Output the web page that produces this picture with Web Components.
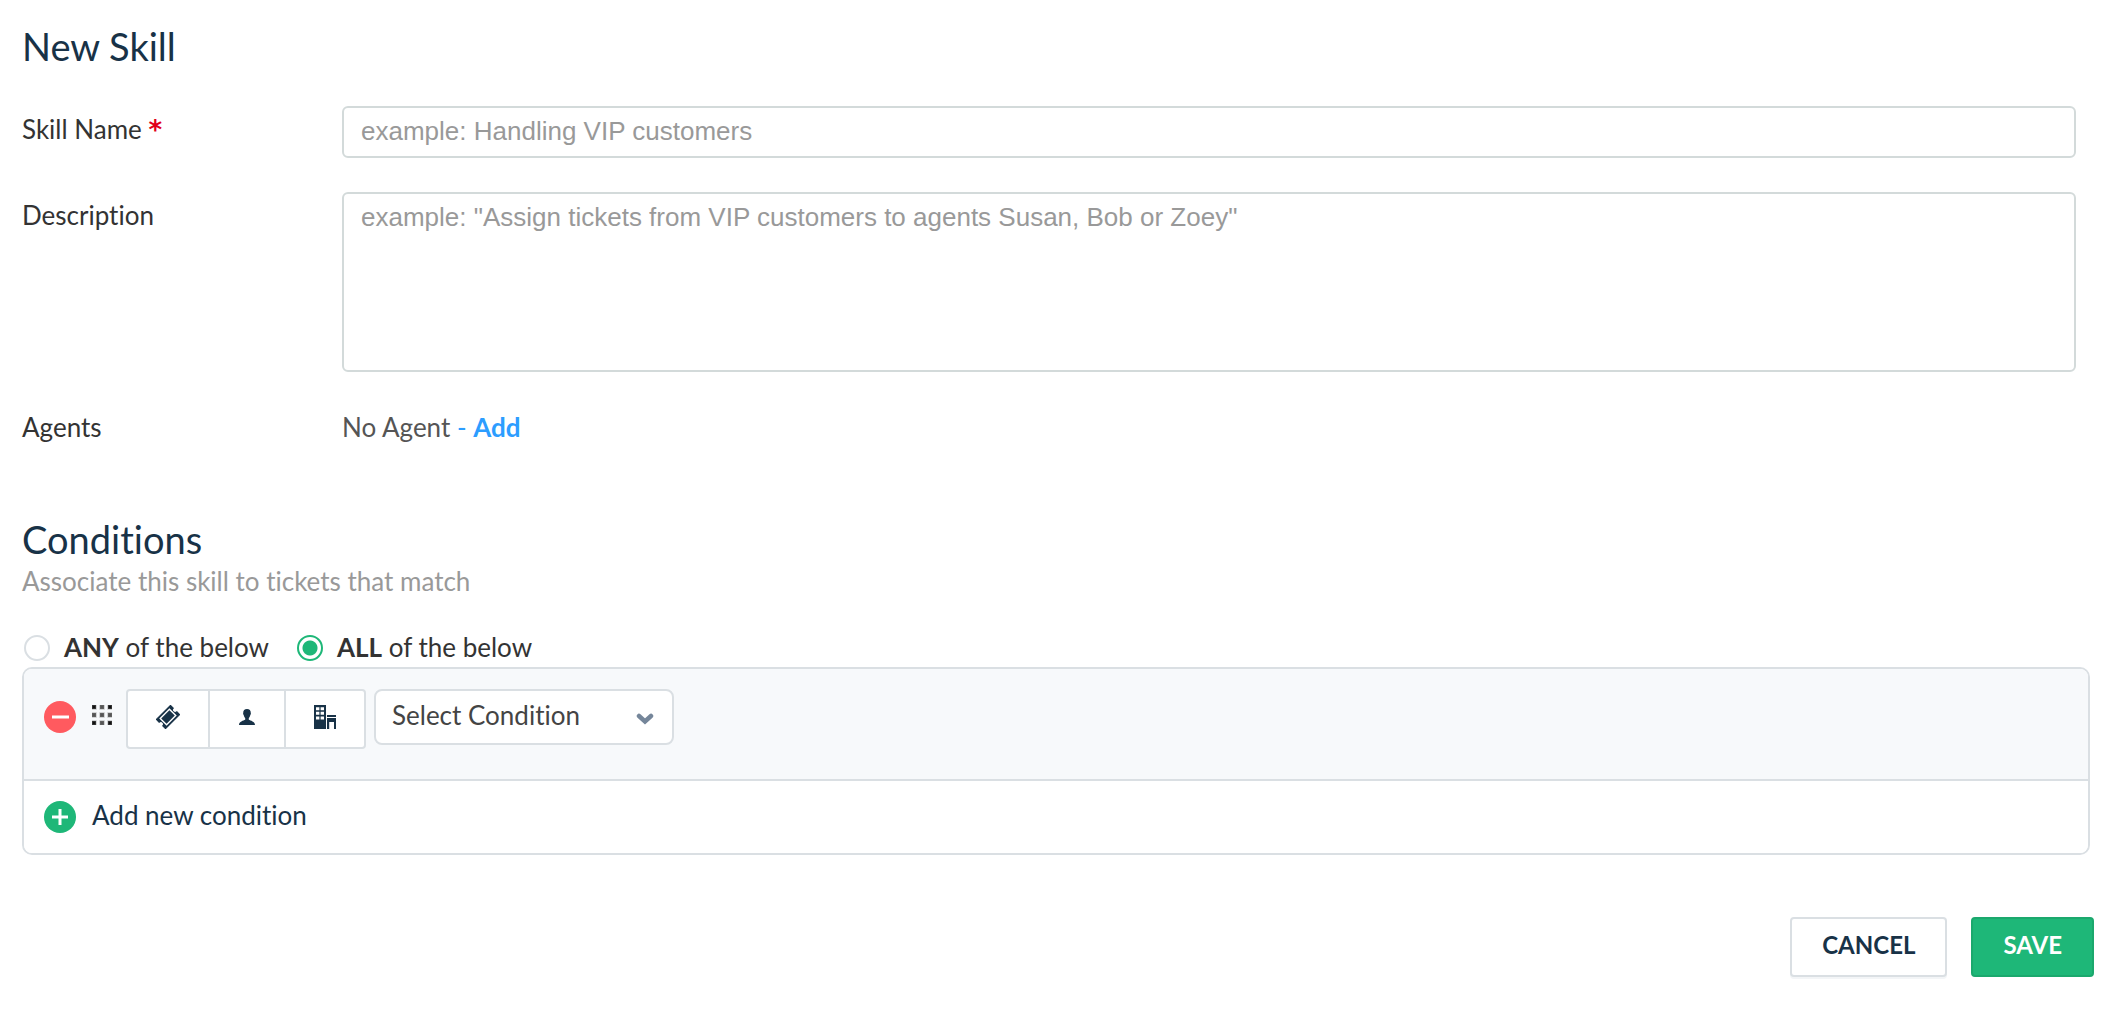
<!DOCTYPE html>
<html lang="en">
<head>
<meta charset="utf-8">
<meta name="viewport" content="width=device-width, initial-scale=1">
<title>New Skill</title>
<style>
    body {
        margin: 0;
        background: #fff;
        color: #333;
        font-family: Lato, "Open Sans", sans-serif;
        font-size: 26px;
        font-variant-ligatures: none;
        line-height: 32px;
        --navy: #183247;
        --green: #1eb778;
        --line: #dadfe3;
    }
</style>
</head>
<body>
<skill-form></skill-form>

<script>
class FieldRow extends HTMLElement {

    constructor() {
        super();
        this._shadowDOM = this.attachShadow({ mode: "open" });
    }
    connectedCallback() {
        this.render();
    }

    get control() {
        const placeholder = this.getAttribute("placeholder");
        if (this.getAttribute("type") === "textarea") {
            return `<textarea id="field" placeholder='${placeholder}'></textarea>`;
        }
        return `<input id="field" type="text" placeholder='${placeholder}' required>`;
    }

    render() {
        const star = this.hasAttribute("required") ? `<span class="star">*</span>` : "";
        this._shadowDOM.innerHTML = `
        <style>
            * {
                margin: 0;
                box-sizing: border-box;
            }
            :host {
                display: flex;
                align-items: flex-start;
            }
            label {
                flex: 0 0 320px;
                padding-top: 7px;
            }
            .star {
                color: #e1001a;
                font-family: "DejaVu Sans", sans-serif;
                font-weight: 700;
            }
            input, textarea {
                flex: 1;
                min-width: 0;
                border: 2px solid #d3dada;
                border-radius: 6px;
                padding: 7px 17px;
                background: #fff;
                color: #333;
                font: 26px/32px "Liberation Sans", Arial, sans-serif;
                outline: none;
                resize: none;
            }
            input {
                height: 52px;
                padding-bottom: 9px;
            }
            textarea {
                height: 180px;
            }
            ::placeholder {
                color: #999;
                opacity: 1;
            }
        </style>
        <label for="field">${this.getAttribute("label")} ${star}</label>
        ${this.control}
        `;
    }
}

class AgentsRow extends HTMLElement {

    constructor() {
        super();
        this._shadowDOM = this.attachShadow({ mode: "open" });
    }
    connectedCallback() {
        this.render();
    }

    render() {
        this._shadowDOM.innerHTML = `
        <style>
            :host {
                display: flex;
            }
            .label {
                flex: 0 0 320px;
            }
            .value {
                color: #555;
            }
            a {
                color: #2c9dff;
                text-decoration: none;
            }
        </style>
        <span class="label">Agents</span>
        <span class="value"><slot></slot> <a href="#add-agent">- <b>Add</b></a></span>
        `;
    }
}

class MatchType extends HTMLElement {

    constructor() {
        super();
        this._shadowDOM = this.attachShadow({ mode: "open" });
    }
    connectedCallback() {
        this.render();
    }

    render() {
        this._shadowDOM.innerHTML = `
        <style>
            :host {
                display: flex;
                gap: 28px;
                padding-left: 2px;
            }
            label {
                display: flex;
                align-items: center;
                gap: 14px;
            }
            input {
                appearance: none;
                box-sizing: border-box;
                width: 26px;
                height: 26px;
                margin: 2px 0 0;
                border: 2px solid var(--line);
                border-radius: 50%;
                background: #fff;
            }
            input:checked {
                border-color: var(--green);
                background: radial-gradient(circle, var(--green) 7px, #fff 8px);
            }
        </style>
        <label><input type="radio" name="match" value="any"><span><b>ANY</b> of the below</span></label>
        <label><input type="radio" name="match" value="all" checked><span><b>ALL</b> of the below</span></label>
        `;
    }
}

class SourcePicker extends HTMLElement {

    constructor() {
        super();
        this._shadowDOM = this.attachShadow({ mode: "open" });
    }
    connectedCallback() {
        this.render();
    }

    render() {
        this._shadowDOM.innerHTML = `
        <style>
            :host {
                display: flex;
                box-sizing: border-box;
                height: 60px;
                border: 2px solid var(--line);
                border-radius: 4px;
                background: #fff;
                overflow: hidden;
            }
            button {
                display: flex;
                align-items: center;
                justify-content: center;
                width: 76px;
                padding: 0 0 4px;
                border: 0;
                background: none;
                color: var(--navy);
            }
            button:first-of-type, button:last-of-type {
                width: 80px;
            }
            button + button {
                border-left: 2px solid var(--line);
            }
            svg {
                fill: currentColor;
            }
        </style>
        <button type="button" aria-label="Ticket">
            <svg width="24" height="24" viewBox="0 0 24 24">
                <g transform="rotate(-45 12 12)">
                    <path d="M2 5.500H22V9.500A2.500 2.500 0 0 0 22 14.500V18.500H2V14.500A2.500 2.500 0 0 0 2 9.500Z" stroke="currentColor" stroke-width="1" stroke-linejoin="round"/>
                    <rect x="5.500" y="7.500" width="13" height="9" fill="none" stroke="#fff" stroke-width="1.400"/>
                </g>
            </svg>
        </button>
        <button type="button" aria-label="Contact">
            <svg width="16" height="16" viewBox="0 0 16 16">
                <path d="M8 0C5.500 0 4.200 1.500 4.200 4C4 4.500 4.100 5.600 4.700 6C5 7.500 5.500 8.400 6.200 9V10.700C4.500 11.600 0 12.400 0 16H16C16 12.400 11.500 11.600 9.800 10.700V9C10.500 8.400 11 7.500 11.300 6C11.900 5.600 12 4.500 11.800 4C11.800 1.500 10.500 0 8 0Z"/>
            </svg>
        </button>
        <button type="button" aria-label="Company">
            <svg width="22" height="24" viewBox="0 0 22 24">
                <path d="M0 0H12V24H0Z"/>
                <path d="M2 2.200H5.400V5.200H2ZM6.600 2.200H10V5.200H6.600ZM2 6.800H5.400V9.800H2ZM6.600 6.800H10V9.800H6.600ZM2 11.400H5.400V14.600H2ZM6.600 11.400H10V14.600H6.600Z" fill="#fff"/>
                <path d="M13 10H22V12H13ZM13 13H22V24H20V17H15.200V24H13Z"/>
            </svg>
        </button>
        `;
    }
}

class ConditionPanel extends HTMLElement {

    constructor() {
        super();
        this._shadowDOM = this.attachShadow({ mode: "open" });
    }
    connectedCallback() {
        this.render();
    }

    render() {
        // the drag handle is a 3x3 grid of dots, darker towards the corners
        const dots = [0, 8, 16].map(y => [0, 8, 16].map(x => {
            const shade = x !== 8 && y !== 8 ? "#111" : "#555";
            return `<rect x="${x}" y="${y}" width="4" height="4" fill="${shade}" stroke="#777" stroke-opacity=".4" stroke-width="1.500"/>`;
        }).join("")).join("");

        this._shadowDOM.innerHTML = `
        <style>
            * {
                box-sizing: border-box;
            }
            :host {
                display: block;
                border: 2px solid var(--line);
                border-radius: 10px;
                overflow: hidden;
            }
            .condition {
                display: flex;
                align-items: flex-start;
                padding: 20px 20px 30px;
                background: #f7f9fb;
                border-bottom: 2px solid var(--line);
            }
            .remove {
                display: flex;
                margin: 12px 16px 0 0;
                padding: 0;
                border: 0;
                background: none;
            }
            .grip {
                margin: 16px 14px 0 0;
            }
            .select {
                display: grid;
                align-items: center;
                width: 300px;
                margin-left: 8px;
            }
            .select > * {
                grid-area: 1 / 1;
            }
            select {
                appearance: none;
                width: 100%;
                height: 56px;
                padding: 0 16px 4px;
                border: 2px solid var(--line);
                border-radius: 8px;
                background: #fff;
                color: #444;
                font: inherit;
                font-variant-ligatures: none;
            }
            .arrow {
                justify-self: end;
                margin: 4px 20px 0 0;
                pointer-events: none;
            }
            .add {
                display: flex;
                align-items: center;
                gap: 16px;
                width: 100%;
                padding: 18px 20px 20px;
                border: 0;
                background: #fff;
                color: var(--navy);
                font: inherit;
                font-variant-ligatures: none;
                line-height: 32px;
            }
            .add svg {
                margin-top: 2px;
            }
            .add span {
                padding-bottom: 2px;
            }
        </style>
        <div class="condition">
            <button class="remove" type="button" aria-label="Remove condition">
                <svg width="32" height="32" viewBox="0 0 32 32"><circle cx="16" cy="16" r="16" fill="#ff5a5f"/><path d="M8 16H25" stroke="#fff" stroke-width="3"/></svg>
            </button>
            <svg class="grip" width="20" height="20" viewBox="0 0 20 20">${dots}</svg>
            <source-picker></source-picker>
            <div class="select">
                <select aria-label="Condition"><option>Select Condition</option></select>
                <svg class="arrow" width="18" height="12" viewBox="0 0 18 12"><path d="M3 3L9 8.500L15 3" fill="none" stroke="#75869a" stroke-width="4.500" stroke-linecap="round"/></svg>
            </div>
        </div>
        <button class="add" type="button">
            <svg width="32" height="32" viewBox="0 0 32 32"><circle cx="16" cy="16" r="16" fill="#1eb778"/><path d="M8 16H24M16 8V24" stroke="#fff" stroke-width="3"/></svg>
            <span>Add new condition</span>
        </button>
        `;
    }
}

class ActionButton extends HTMLElement {

    constructor() {
        super();
        this._shadowDOM = this.attachShadow({ mode: "open" });
    }
    connectedCallback() {
        this.render();
    }

    render() {
        this._shadowDOM.innerHTML = `
        <style>
            :host {
                display: block;
            }
            button {
                box-sizing: border-box;
                height: 60px;
                padding: 0 30px 4px;
                border: 2px solid var(--line);
                border-radius: 4px;
                background: #fff;
                box-shadow: 0 2px 0 #f3f5f7;
                color: var(--navy);
                font: bold 24px/32px Lato, sans-serif;
            }
            :host([primary]) button {
                border-color: #1ba86d;
                background: var(--green);
                box-shadow: none;
                color: #fff;
            }
        </style>
        <button type="button"><slot></slot></button>
        `;
    }
}

class SkillForm extends HTMLElement {

    constructor() {
        super();
        this._shadowDOM = this.attachShadow({ mode: "open" });
    }
    connectedCallback() {
        this.render();
    }

    render() {
        this._shadowDOM.innerHTML = `
        <style>
            * {
                margin: 0;
                box-sizing: border-box;
            }
            :host {
                display: block;
                padding: 22px 22px 32px;
            }
            h1, h2 {
                color: var(--navy);
                font-size: 38px;
                font-weight: 400;
                line-height: 48px;
            }
            .fields {
                display: flex;
                flex-direction: column;
                gap: 34px;
                margin: 36px 18px 72px 0;
            }
            agents-row {
                margin-top: 5px;
            }
            .hint {
                margin-top: 2px;
                color: #999;
            }
            match-type {
                margin: 34px 0 4px;
            }
            condition-panel {
                margin-right: 4px;
            }
            footer {
                display: flex;
                justify-content: flex-end;
                gap: 24px;
                margin-top: 62px;
            }
        </style>
        <h1>New Skill</h1>
        <div class="fields">
            <field-row label="Skill Name" placeholder="example: Handling VIP customers" required></field-row>
            <field-row label="Description" type="textarea" placeholder='example: "Assign tickets from VIP customers to agents Susan, Bob or Zoey"'></field-row>
            <agents-row>No Agent</agents-row>
        </div>
        <h2>Conditions</h2>
        <p class="hint">Associate this skill to tickets that match</p>
        <match-type></match-type>
        <condition-panel></condition-panel>
        <footer>
            <action-button>CANCEL</action-button>
            <action-button primary>SAVE</action-button>
        </footer>
        `;
    }
}

customElements.define("field-row", FieldRow);
customElements.define("agents-row", AgentsRow);
customElements.define("match-type", MatchType);
customElements.define("source-picker", SourcePicker);
customElements.define("condition-panel", ConditionPanel);
customElements.define("action-button", ActionButton);
customElements.define("skill-form", SkillForm);
</script>
</body>
</html>
